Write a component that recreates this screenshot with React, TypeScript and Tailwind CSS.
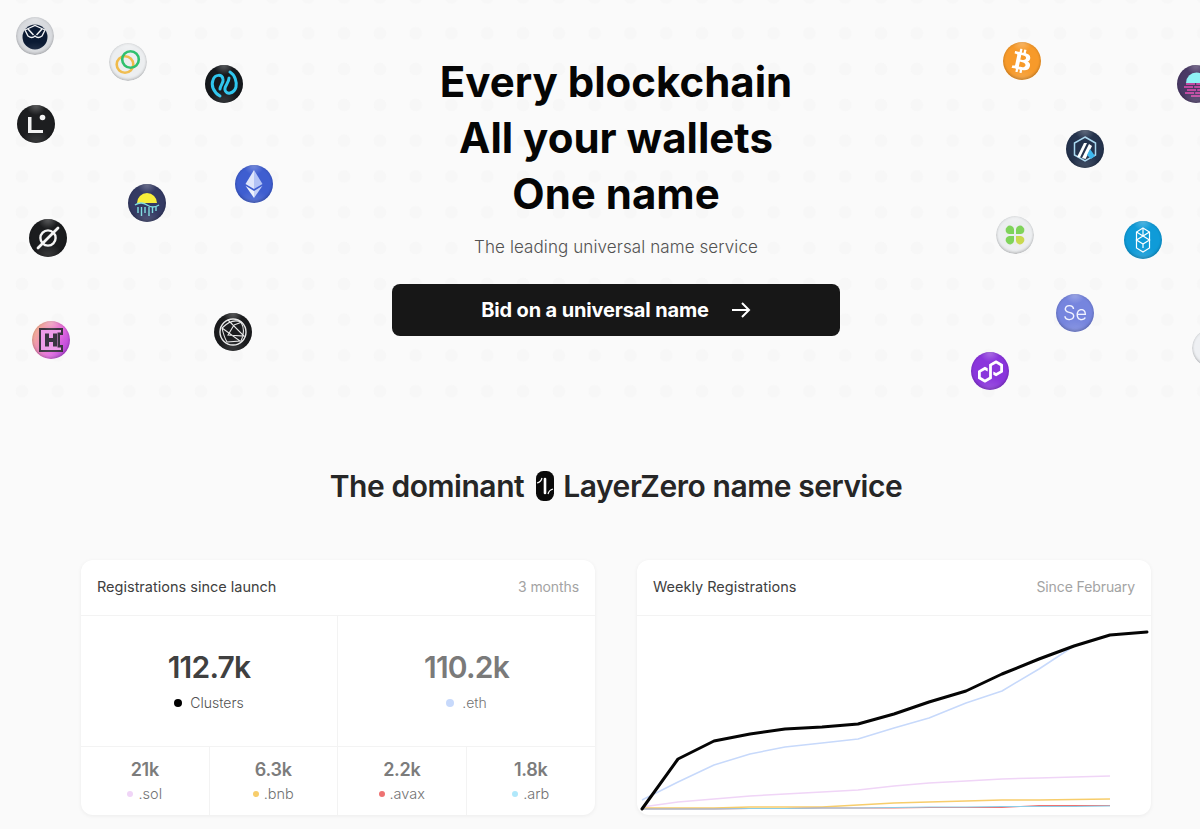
import type { ReactNode } from "react";
import { FaBtc } from "react-icons/fa";
import { SiPolygon } from "react-icons/si";

const font = "font-['Inter','Liberation_Sans',sans-serif]";

type Coin = {
  pos: string;
  bg: string;
  logo: ReactNode;
};

const coins: Coin[] = [
  {
    pos: "left-[16px] top-[17px]",
    bg: "bg-[#d8dade]",
    logo: (
      <svg viewBox="0 0 38 38" className="size-full">
        <circle cx="19" cy="20" r="12.5" fill="#0b1a33" />
        <path d="M9 13 L19 8.5 L29 13 L26 19 Q22 22 19 19 Q16 22 12 19 Z" fill="#0b1a33" stroke="#f2f3f5" strokeWidth="1.3" />
        <path d="M12 12 L17.5 18 M26 12 L20.5 18" stroke="#f2f3f5" strokeWidth="1.5" />
      </svg>
    ),
  },
  {
    pos: "left-[109px] top-[43px]",
    bg: "bg-[#eceef0]",
    logo: (
      <svg viewBox="0 0 38 38" className="size-full" fill="none">
        <circle cx="16" cy="21.5" r="8.3" stroke="#f0bb4a" strokeWidth="2.6" />
        <circle cx="21.5" cy="16.5" r="8.3" stroke="#2fc06e" strokeWidth="2.6" />
      </svg>
    ),
  },
  {
    pos: "left-[205px] top-[65px]",
    bg: "bg-[#16191d]",
    logo: (
      <svg viewBox="0 0 38 38" className="size-full" fill="none" stroke="#2fc6ee" strokeWidth="3" strokeLinecap="round">
        <path d="M15 31 C8 27 6 20 8 15 C10 9 17 9 18 14 C19 18 15 20 15 24" />
        <path d="M25 7 C30 10 32 17 31 22 C29 29 21 30 20 25 C19 21 24 18 24 13" />
      </svg>
    ),
  },
  {
    pos: "left-[17px] top-[105px]",
    bg: "bg-[#1d1e20]",
    logo: (
      <svg viewBox="0 0 38 38" className="size-full">
        <path d="M11 12 H14.5 V25 H26 V28 H11 Z" fill="#f2f2f2" />
        <circle cx="25.5" cy="12.5" r="2.8" fill="#f2f2f2" />
      </svg>
    ),
  },
  {
    pos: "left-[235px] top-[165px]",
    bg: "bg-[#3f5ed0]",
    logo: (
      <svg viewBox="0 0 38 38" className="size-full">
        <path d="M19 5 L10.5 19 L19 24 Z" fill="#dfe6fb" />
        <path d="M19 5 L27.5 19 L19 24 Z" fill="#b3c3f5" />
        <path d="M10.5 20.8 L19 26 L19 33 Z" fill="#eef2fd" />
        <path d="M27.5 20.8 L19 26 L19 33 Z" fill="#c6d2f8" />
      </svg>
    ),
  },
  {
    pos: "left-[128px] top-[184px]",
    bg: "bg-[#343a63]",
    logo: (
      <svg viewBox="0 0 38 38" className="size-full" fill="none">
        <path d="M9 19 A10 10 0 0 1 29 19 Z" fill="#f7ee3a" />
        <path d="M7 21 Q13 17 19 21 T31 21" stroke="#7fdde0" strokeWidth="1.5" />
        <path d="M10 23 V29 M13.5 23 V32 M17 23 V29 M21 23 V32 M24.5 23 V29 M28 23 V27" stroke="#7fdde0" strokeWidth="1.4" />
      </svg>
    ),
  },
  {
    pos: "left-[29px] top-[219px]",
    bg: "bg-[#1b1c1e]",
    logo: (
      <svg viewBox="0 0 38 38" className="size-full" fill="none" stroke="#f5f5f5">
        <circle cx="19" cy="19" r="7.6" strokeWidth="2.4" />
        <path d="M9 29 L29 9" strokeWidth="2.8" strokeLinecap="round" />
      </svg>
    ),
  },
  {
    pos: "left-[32px] top-[321px]",
    bg: "bg-[linear-gradient(120deg,#f7c27e,#e56be0_60%,#a033d8)]",
    logo: (
      <svg viewBox="0 0 38 38" className="size-full">
        <path d="M7 7 H31 V14 H28 V24 H31 V31 H7 Z" fill="#3a3440" />
        <path d="M9 9 H29 V11.5 H25.5 V26.5 H29 V29 H9 Z" fill="#ee9ce8" />
        <path d="M13 12.5 H17 V17 H21 V12.5 H25 V25.5 H21 V21 H17 V25.5 H13 Z" fill="#3a3440" />
      </svg>
    ),
  },
  {
    pos: "left-[214px] top-[313px]",
    bg: "bg-[#1b1c1e]",
    logo: (
      <svg viewBox="0 0 38 38" className="size-full" fill="none" stroke="#e8e8e8" strokeWidth="1.1">
        <circle cx="19" cy="19" r="13" strokeWidth="1.4" />
        <path d="M8 15 Q18 5 27 9 Q32 18 27 28 M8 15 L26 28 L13 29 M8 15 Q10 24 13 29 M14 7 L30 23 L14 22 L20 12 M20 12 L28 9" />
      </svg>
    ),
  },
  {
    pos: "left-[1003px] top-[42px]",
    bg: "bg-[#f79a2a]",
    logo: (
      <div className="flex size-full items-center justify-center">
        <FaBtc className="size-[24px] rotate-[12deg] text-white" />
      </div>
    ),
  },
  {
    pos: "left-[1177px] top-[65px]",
    bg: "bg-[#4a3a66]",
    logo: (
      <svg viewBox="0 0 38 38" className="size-full" fill="none">
        <path d="M9 18 A10.5 10.5 0 0 1 30 18 Z" fill="#8ff2f5" />
        <path d="M9 19 H32 M7 22 H34 M10 25 H34 M8 28 H30 M14 31 H30" stroke="#e74fb5" strokeWidth="1.4" strokeDasharray="9 1.2" />
      </svg>
    ),
  },
  {
    pos: "left-[1066px] top-[130px]",
    bg: "bg-[#25344e]",
    logo: (
      <svg viewBox="0 0 38 38" className="size-full" fill="none">
        <path d="M19 7 L29.5 13 V25 L19 31 L8.5 25 V13 Z" stroke="#a9d8f0" strokeWidth="1.5" />
        <path d="M11 27 L18 13 H21 L14 27.5 Z M16 28 L23 14 L26 16 L19.5 29 Z" fill="#fff" />
        <path d="M24 19 L29 26 L25 29 L21 25 Z" fill="#3db7ee" />
      </svg>
    ),
  },
  {
    pos: "left-[996px] top-[216px]",
    bg: "bg-[#eceef0]",
    logo: (
      <svg viewBox="0 0 38 38" className="size-full">
        <path d="M18 18 H13 A4 4 0 0 1 11 11 A4 4 0 0 1 18 13 Z" fill="#7fd35a" />
        <path d="M20 18 V13 A4 4 0 0 1 27 11 A4 4 0 0 1 25 18 Z" fill="#7fd35a" />
        <path d="M18 20 V25 A4 4 0 0 1 11 27 A4 4 0 0 1 13 20 Z" fill="#7fd35a" />
        <path d="M20 20 H25 A4 4 0 0 1 27 27 A4 4 0 0 1 20 25 Z" fill="#c9d94e" />
      </svg>
    ),
  },
  {
    pos: "left-[1124px] top-[221px]",
    bg: "bg-[#0f9bd8]",
    logo: (
      <svg viewBox="0 0 38 38" className="size-full" fill="none" stroke="#fff" strokeWidth="1.2">
        <path d="M19 7 L25.5 11 V27 L19 31 L12.5 27 V11 Z" />
        <path d="M12.5 11 L19 15 L25.5 11 M12.5 19 L19 15 L25.5 19 L19 23 Z M19 7 V15 M19 23 V27" />
      </svg>
    ),
  },
  {
    pos: "left-[1056px] top-[294px]",
    bg: "bg-[#7685de]",
    logo: (
      <div className={`flex size-full items-center justify-center text-[20px] font-light text-[#f1f3ff] ${font}`}>
        Se
      </div>
    ),
  },
  {
    pos: "left-[971px] top-[352px]",
    bg: "bg-[#8a35dc]",
    logo: (
      <div className="flex size-full items-center justify-center">
        <SiPolygon className="size-[25px] text-white" />
      </div>
    ),
  },
  {
    pos: "left-[1192px] top-[329px]",
    bg: "bg-[#eef0f3]",
    logo: null,
  },
];

function CoinBadge({ coin }: { coin: Coin }) {
  return (
    <div className={`absolute size-[38px] overflow-hidden rounded-full ${coin.pos} ${coin.bg}`}>
      <div className="size-full blur-[0.3px]">{coin.logo}</div>
      <span className="absolute inset-0 rounded-full bg-[radial-gradient(circle_at_50%_0%,rgba(255,255,255,0.3),transparent_24%),radial-gradient(circle_at_50%_110%,rgba(255,255,255,0.2),transparent_38%)] shadow-[inset_0_0_3px_rgba(0,0,0,0.2),inset_0_-2px_3px_rgba(0,0,0,0.14)]" />
    </div>
  );
}

const black = "642,809 678,759 714,741 750,734 785,729 822,727 858,724 894,714 929,702 966,691 1002,674 1039,659 1074,646 1110,635 1147,632";
const eth = "642,800 678,782 714,765 750,754 785,747 822,743 858,739 894,728 929,718 966,703 1002,691 1039,669 1074,646";
const sol = "642,807 678,802 714,799 750,796 785,794 822,792 858,790 894,786 929,783 966,781 1002,779 1039,778 1074,777 1110,776";
const bnb = "642,808 678,808 714,808 750,807 785,807 822,807 858,805 894,803 929,802 966,801 1002,800 1039,800 1074,799.5 1110,799";
const avax = "642,809 678,809 714,809 750,808.5 785,808.5 822,808 858,808 894,808 929,807.5 966,807.5 1002,807.5 1039,805.5 1074,805.5 1110,805.5";
const arb = "642,809 678,809 714,809 750,808.5 785,808.5 822,808 858,808 894,807.5 929,807 966,807 1002,806.5 1039,806.5 1074,806.5 1110,806";

function MiniStat({ value, label, dot, last }: { value: string; label: string; dot: string; last?: boolean }) {
  return (
    <div className={`flex flex-col items-center pt-[11px] ${last ? "" : "border-r border-[#f3f3f3]"}`}>
      <div className="text-[18px] leading-[24px] font-semibold tracking-[-0.3px] text-[#7c7c7c]">{value}</div>
      <div className="mt-[2px] flex items-center gap-[5px] text-[14.5px] leading-[20px] font-light text-[#737373]">
        <span className={`size-[6px] rounded-full ${dot}`} />
        {label}
      </div>
    </div>
  );
}

export default function App() {
  return (
    <div className={`relative h-[829px] overflow-hidden bg-[#fafafa] ${font}`}>
      <div className="absolute inset-x-0 top-0 h-[410px] bg-[radial-gradient(circle,#f7f7f7_6px,transparent_6.6px)] bg-[length:35.8px_35.8px] bg-[position:4px_15.4px]" />
      {coins.map((coin) => (
        <CoinBadge key={coin.pos} coin={coin} />
      ))}

      <div className="relative pl-8">
        <div className="flex flex-col items-center pt-[54px]">
          <h1 className="text-center text-[42px] leading-[56px] font-bold text-[#050505]">
            Every blockchain
            <br />
            All your wallets
            <br />
            One name
          </h1>
          <p className="mt-[11px] text-[17px] leading-[28px] font-light tracking-[0.1px] text-[#525252]">The leading universal name service</p>
          <button className="mt-[23px] flex h-[52px] w-[448px] items-center justify-center gap-[22px] rounded-lg bg-[#171717] text-[20px] font-bold tracking-[-0.15px] text-white">
            Bid on a universal name
            <svg viewBox="0 0 20 20" className="size-[20px]" fill="none" stroke="#fff" strokeWidth="2">
              <path d="M1 10 H18 M11 3 L18 10 L11 17" />
            </svg>
          </button>
        </div>

        <h2 className="mt-[132px] flex h-[36px] items-center justify-center text-[30px] font-semibold tracking-[-0.45px] text-[#262626]">
          The dominant
          <svg viewBox="0 0 18 30" className="ml-[12px] mr-[9px] h-[30px] w-[18px]">
            <rect width="18" height="30" rx="7.5" fill="#0a0a0a" />
            <path d="M9 8 V22" stroke="#fff" strokeWidth="2.6" strokeLinecap="round" />
            <path d="M1 12 Q5 11 6 7 M17 18 Q13 19 12 23" stroke="#fff" strokeWidth="1.2" fill="none" />
          </svg>
          LayerZero name service
        </h2>

        <div className="mt-14 grid grid-cols-2 gap-[42px] px-[49px]">
          <div className="h-[255px] overflow-hidden rounded-xl bg-white shadow-[0_1px_4px_rgba(0,0,0,0.06)]">
            <div className="flex h-[56px] items-center justify-between border-b border-[#f3f3f3] px-4 pb-[2px]">
              <span className="text-[14.5px] font-normal text-[#404040]">Registrations since launch</span>
              <span className="text-[14px] font-normal tracking-[-0.1px] text-[#a3a3a3]">3 months</span>
            </div>
            <div className="grid h-[131px] grid-cols-2 border-b border-[#f3f3f3]">
              <div className="flex flex-col items-center border-r border-[#f3f3f3] pt-[31px]">
                <div className="text-[30px] leading-[40px] font-semibold tracking-[-0.8px] text-[#404040]">112.7k</div>
                <div className="mt-[6px] flex items-center gap-[8px] text-[14px] leading-[20px] font-light text-[#525252]">
                  <span className="size-[8px] rounded-full bg-black" />
                  Clusters
                </div>
              </div>
              <div className="flex flex-col items-center pt-[31px]">
                <div className="text-[30px] leading-[40px] font-semibold tracking-[-0.8px] text-[#7a7a7a]">110.2k</div>
                <div className="mt-[6px] flex items-center gap-[8px] text-[14px] leading-[20px] font-light text-[#737373]">
                  <span className="size-[8px] rounded-full bg-[#c7d9fb]" />
                  .eth
                </div>
              </div>
            </div>
            <div className="grid h-[68px] grid-cols-4">
              <MiniStat value="21k" label=".sol" dot="bg-[#f0d5f7]" />
              <MiniStat value="6.3k" label=".bnb" dot="bg-[#f7cd6b]" />
              <MiniStat value="2.2k" label=".avax" dot="bg-[#ee7272]" />
              <MiniStat value="1.8k" label=".arb" dot="bg-[#b0e8fb]" last />
            </div>
          </div>

          <div className="h-[255px] overflow-hidden rounded-xl bg-white shadow-[0_1px_4px_rgba(0,0,0,0.06)]">
            <div className="flex h-[56px] items-center justify-between border-b border-[#f3f3f3] px-4 pb-[2px]">
              <span className="text-[14.5px] font-normal text-[#404040]">Weekly Registrations</span>
              <span className="text-[14px] font-normal tracking-[-0.1px] text-[#a3a3a3]">Since February</span>
            </div>
            <svg viewBox="637 616 514 199" className="h-[199px] w-[514px]" fill="none" strokeLinejoin="round">
              <polyline points={eth} stroke="#c7d9fb" strokeWidth="1.5" />
              <polyline points={sol} stroke="#f0d5f7" strokeWidth="1.5" />
              <polyline points={bnb} stroke="#f7cd6b" strokeWidth="1.5" />
              <polyline points={avax} stroke="#ee7272" strokeWidth="1" />
              <polyline points={arb} stroke="#8ccde6" strokeWidth="1.2" />
              <polyline points={black} stroke="#050505" strokeWidth="3" strokeLinecap="round" />
            </svg>
          </div>
        </div>
      </div>
    </div>
  );
}
